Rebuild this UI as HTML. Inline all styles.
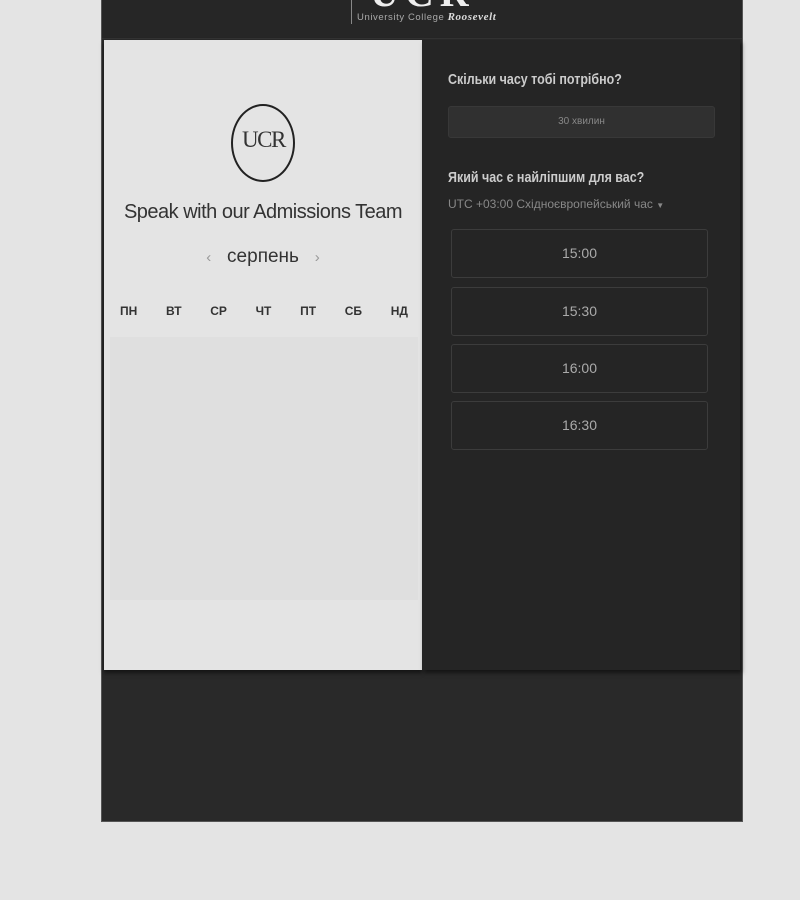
<!DOCTYPE html>
<html><head><meta charset="utf-8"><style>
*{margin:0;padding:0;box-sizing:border-box}
body{width:800px;height:900px;background:#e4e4e4;position:relative;overflow:hidden;font-family:"Liberation Sans",sans-serif}
.wrap{position:absolute;left:101px;top:0;width:642px;height:822px;background:#292929;border:1px solid #555;border-top:none}
.hdr{position:absolute;left:0;top:0;width:640px;height:39px;background:#262626;border-bottom:1px solid #333;overflow:hidden}
.left{position:absolute;left:104px;top:40px;width:318px;height:630px;background:#e4e4e4;box-shadow:0 3px 4px rgba(0,0,0,.5)}
.right{position:absolute;left:422px;top:40px;width:318px;height:630px;background:#252525;box-shadow:2px 3px 4px rgba(0,0,0,.5)}
.cal{position:absolute;left:6px;top:297px;width:308px;height:263px;background:#dfdfdf}
.slot{position:absolute;left:29px;width:257px;height:49px;border:1px solid #3c3c3c;border-radius:3px;color:#aaa;font-size:14px;text-align:center;line-height:47px}
.h{position:absolute;left:26px;color:#ccc;font-size:14.5px;font-weight:bold;transform:scaleX(.86);transform-origin:left center;white-space:nowrap}
</style></head><body>
<div class="wrap"><div class="hdr">
<div style="position:absolute;left:249px;top:-6px;width:1px;height:30px;background:#888"></div>
<div style="position:absolute;left:268px;top:-31px;color:#eee;font:bold 40px 'Liberation Serif',serif;letter-spacing:6px">UCR</div>
<div style="position:absolute;left:255px;top:11px;color:#aaa;font-size:9.5px;letter-spacing:.6px">University College <i style="font-family:'Liberation Serif',serif;font-weight:bold;color:#ddd;font-size:11px">Roosevelt</i></div>
</div></div>
<div class="left">
<div style="position:absolute;left:127px;top:64px;width:64px;height:78px;border:2px solid #222;border-radius:50%"></div>
<div style="position:absolute;left:138px;top:87px;font:23px 'Liberation Serif',serif;color:#333;letter-spacing:-1.5px">UCR</div>
<div style="position:absolute;left:0;width:318px;top:161px;text-align:center;font-size:20px;color:#333;letter-spacing:-.5px">Speak with our Admissions Team</div>
<div style="position:absolute;left:0;width:318px;top:206px;text-align:center;font-size:19px;color:#333"><span style="color:#999;font-size:15px">‹</span>&nbsp;&nbsp; серпень &nbsp;&nbsp;<span style="color:#999;font-size:15px">›</span></div>
<div style="position:absolute;left:0;top:264px;width:318px;display:flex;justify-content:space-between;padding:0 14px 0 16px;font-size:12px;font-weight:bold;color:#333"><span>ПН</span><span>ВТ</span><span>СР</span><span>ЧТ</span><span>ПТ</span><span>СБ</span><span>НД</span></div>
<div class="cal"></div>
</div>
<div class="right">
<div class="h" style="top:32px">Скільки часу тобі потрібно?</div>
<div style="position:absolute;left:26px;top:66px;width:267px;height:32px;background:#303030;border:1px solid #383838;border-radius:3px;color:#888;font-size:10px;text-align:center;line-height:30px">30 хвилин</div>
<div class="h" style="top:130px">Який час є найліпшим для вас?</div>
<div style="position:absolute;left:26px;top:157px;color:#888;font-size:12px">UTC +03:00 Східноєвропейський час <span style="font-size:8px">▼</span></div>
<div class="slot" style="top:189px">15:00</div>
<div class="slot" style="top:247px">15:30</div>
<div class="slot" style="top:304px">16:00</div>
<div class="slot" style="top:361px">16:30</div>
</div>
</body></html>
